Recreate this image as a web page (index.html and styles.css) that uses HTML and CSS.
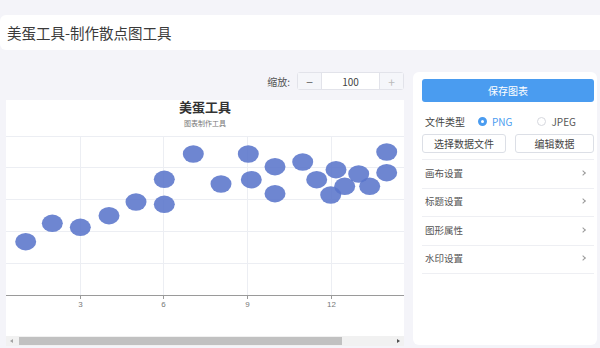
FILE: index.html
```html
<!DOCTYPE html>
<html lang="zh">
<head>
<meta charset="utf-8">
<link rel="stylesheet" href="styles.css">
</head>
<body>
<div class="page">
  <div class="header">美蛋工具-制作散点图工具</div>
  <div class="main">
    <div class="left">
      <div class="toolbar">
        <span class="zoom-label">缩放:</span>
        <div class="stepper">
          <span class="step">−</span>
          <span class="value">100</span>
          <span class="step plus">+</span>
        </div>
      </div>
      <div class="chart">
        <div class="chart-title">美蛋工具</div>
        <div class="chart-sub">图表制作工具</div>
        <svg class="plot" width="398" height="206" viewBox="0 0 398 206">
          <g class="grid">
            <line x1="0" y1="6.5" x2="398" y2="6.5"/>
            <line x1="0" y1="37.5" x2="398" y2="37.5"/>
            <line x1="0" y1="69.5" x2="398" y2="69.5"/>
            <line x1="0" y1="101.5" x2="398" y2="101.5"/>
            <line x1="0" y1="133.5" x2="398" y2="133.5"/>
            <line x1="74.5" y1="6" x2="74.5" y2="165"/>
            <line x1="157.5" y1="6" x2="157.5" y2="165"/>
            <line x1="241.5" y1="6" x2="241.5" y2="165"/>
            <line x1="325.5" y1="6" x2="325.5" y2="165"/>
          </g>
          <line class="axis" x1="0" y1="165.5" x2="398" y2="165.5"/>
          <g class="ticks">
            <line x1="74.5" y1="165" x2="74.5" y2="169"/>
            <line x1="157.5" y1="165" x2="157.5" y2="169"/>
            <line x1="241.5" y1="165" x2="241.5" y2="169"/>
            <line x1="325.5" y1="165" x2="325.5" y2="169"/>
          </g>
          <g class="labels">
            <text x="74.5" y="177">3</text>
            <text x="157.5" y="177">6</text>
            <text x="241.5" y="177">9</text>
            <text x="325.5" y="177">12</text>
          </g>
          <g class="dots">
            <ellipse cx="19.7" cy="111.7" rx="10.5" ry="8.7"/>
            <ellipse cx="46.3" cy="93.3" rx="10.5" ry="8.7"/>
            <ellipse cx="74.3" cy="97.3" rx="10.5" ry="8.7"/>
            <ellipse cx="103" cy="85.7" rx="10.5" ry="8.7"/>
            <ellipse cx="130" cy="72" rx="10.5" ry="8.7"/>
            <ellipse cx="158.3" cy="49.3" rx="10.5" ry="8.7"/>
            <ellipse cx="158.3" cy="74.3" rx="10.5" ry="8.7"/>
            <ellipse cx="187.3" cy="24" rx="10.5" ry="8.7"/>
            <ellipse cx="215" cy="54" rx="10.5" ry="8.7"/>
            <ellipse cx="242.3" cy="24" rx="10.5" ry="8.7"/>
            <ellipse cx="245.3" cy="49.7" rx="10.5" ry="8.7"/>
            <ellipse cx="269" cy="36.7" rx="10.5" ry="8.7"/>
            <ellipse cx="269" cy="63.7" rx="10.5" ry="8.7"/>
            <ellipse cx="296.7" cy="32" rx="10.5" ry="8.7"/>
            <ellipse cx="310.7" cy="49.7" rx="10.5" ry="8.7"/>
            <ellipse cx="330" cy="39.7" rx="10.5" ry="8.7"/>
            <ellipse cx="324.7" cy="65" rx="10.5" ry="8.7"/>
            <ellipse cx="338.7" cy="56.3" rx="10.5" ry="8.7"/>
            <ellipse cx="352.7" cy="44" rx="10.5" ry="8.7"/>
            <ellipse cx="363.7" cy="56.3" rx="10.5" ry="8.7"/>
            <ellipse cx="380.7" cy="22" rx="10.5" ry="8.7"/>
            <ellipse cx="380.7" cy="42.7" rx="10.5" ry="8.7"/>
          </g>
        </svg>
      </div>
      <div class="scrollbar">
        <span class="arrow left-arrow"></span>
        <div class="thumb"></div>
        <span class="arrow right-arrow"></span>
      </div>
    </div>
    <div class="panel">
      <div class="save-btn">保存图表</div>
      <div class="file-type">
        <span class="ft-label">文件类型</span>
        <span class="radio checked"><span class="dot"></span><span class="rtext">PNG</span></span>
        <span class="radio"><span class="dot"></span><span class="rtext">JPEG</span></span>
      </div>
      <div class="btn-row">
        <div class="btn wide">选择数据文件</div>
        <div class="btn narrow">编辑数据</div>
      </div>
      <div class="menu">
        <div class="menu-item"><span>画布设置</span><span class="chev"></span></div>
        <div class="menu-item"><span>标题设置</span><span class="chev"></span></div>
        <div class="menu-item"><span>图形属性</span><span class="chev"></span></div>
        <div class="menu-item"><span>水印设置</span><span class="chev"></span></div>
      </div>
    </div>
  </div>
</div>
</body>
</html>
```
FILE: styles.css
```css
* { box-sizing: border-box; }
html, body {
  margin: 0;
  padding: 0;
  width: 600px;
  height: 348px;
  overflow: hidden;
  background: #f4f4f9;
  font-family: "Noto Sans CJK SC", "Noto Sans", "Liberation Sans", sans-serif;
  color: #333;
}
.page {
  padding-top: 15px;
}
.header {
  height: 35px;
  background: #fff;
  border-radius: 6px 0 0 6px;
  padding-left: 7px;
  font-size: 14.5px;
  line-height: 35px;
  color: #3a3a3a;
}
.main {
  display: flex;
  gap: 9px;
  padding: 0 3px 0 6px;
  margin-top: 22px;
}
.left {
  width: 398px;
  display: flex;
  flex-direction: column;
}
.toolbar {
  height: 18px;
  display: flex;
  justify-content: flex-end;
  align-items: center;
  gap: 7px;
  margin-bottom: 10px;
}
.zoom-label {
  font-size: 10px;
  color: #555;
}
.stepper {
  display: flex;
  height: 18px;
  width: 107px;
  border: 1px solid #e2e3ea;
  border-radius: 3px;
  background: #fff;
  font-size: 10px;
}
.step {
  width: 23px;
  display: flex;
  align-items: center;
  justify-content: center;
  background: #f5f6fa;
  color: #666;
  font-size: 12px;
}
.step.plus { color: #bbb; }
.value {
  flex: 1;
  display: flex;
  align-items: center;
  justify-content: center;
  border-left: 1px solid #e2e3ea;
  border-right: 1px solid #e2e3ea;
  color: #444;
}
.chart {
  background: #fff;
  height: 236px;
  display: flex;
  flex-direction: column;
  align-items: center;
}
.chart-title {
  margin-top: -1px;
  font-size: 13px;
  font-weight: bold;
  color: #333;
  line-height: 16px;
}
.chart-sub {
  font-size: 7px;
  color: #777;
  line-height: 12px;
  margin-top: 2px;
}
.plot {
  display: block;
  margin-top: 1px;
}
.grid line {
  stroke: #eceef3;
  stroke-width: 1;
}
.axis {
  stroke: #9a9a9a;
  stroke-width: 1;
}
.ticks line {
  stroke: #9a9a9a;
  stroke-width: 1;
}
.labels text {
  font-family: "Liberation Sans", sans-serif;
  font-size: 8px;
  fill: #777;
  text-anchor: middle;
}
.dots ellipse {
  fill: #5a75cb;
  fill-opacity: 0.88;
}
.scrollbar {
  height: 10px;
  background: #f1f1f1;
  display: flex;
  align-items: center;
}
.arrow {
  width: 0;
  height: 0;
  border-top: 2.5px solid transparent;
  border-bottom: 2.5px solid transparent;
}
.left-arrow {
  border-right: 3px solid #a3a3a3;
  margin-left: 4px;
}
.right-arrow {
  border-left: 3px solid #505050;
  margin-left: auto;
  margin-right: 4px;
}
.thumb {
  margin-left: 6px;
  width: 323px;
  height: 8px;
  background: #c1c1c1;
}
.panel {
  width: 184px;
  height: 273px;
  background: #fff;
  border-radius: 6px;
  padding: 7px 3px 0 9px;
}
.save-btn {
  height: 23px;
  background: #4a9cf0;
  border-radius: 3px;
  color: #fff;
  font-size: 10px;
  display: flex;
  align-items: center;
  justify-content: center;
}
.file-type {
  display: flex;
  align-items: center;
  height: 20px;
  margin-top: 9px;
  font-size: 10px;
  padding-left: 3px;
}
.ft-label { color: #444; }
.radio {
  display: flex;
  align-items: center;
  gap: 5px;
  margin-left: 13px;
  color: #555;
}
.radio + .radio { margin-left: 25px; }
.radio .dot {
  width: 9px;
  height: 9px;
  border-radius: 50%;
  border: 1px solid #d6d8de;
  background: #fff;
}
.radio.checked { color: #4a9cf0; }
.radio.checked .dot {
  border: 3px solid #4a9cf0;
  background: #fff;
}
.btn-row {
  display: flex;
  gap: 9px;
  margin-top: 3px;
}
.btn {
  height: 19px;
  border: 1px solid #dcdfe6;
  border-radius: 3px;
  font-size: 10px;
  color: #444;
  display: flex;
  align-items: center;
  justify-content: center;
}
.btn.wide { width: 84px; }
.btn.narrow { width: 79px; }
.menu {
  margin-top: 6px;
  border-top: 1px solid #eeeff3;
}
.menu-item {
  height: 28.5px;
  border-bottom: 1px solid #eeeff3;
  display: flex;
  align-items: center;
  justify-content: space-between;
  padding: 0 9px 2px 3px;
  font-size: 9.5px;
  color: #555;
}
.chev {
  width: 4px;
  height: 4px;
  border-top: 1px solid #999;
  border-right: 1px solid #999;
  transform: rotate(45deg);
}
```
